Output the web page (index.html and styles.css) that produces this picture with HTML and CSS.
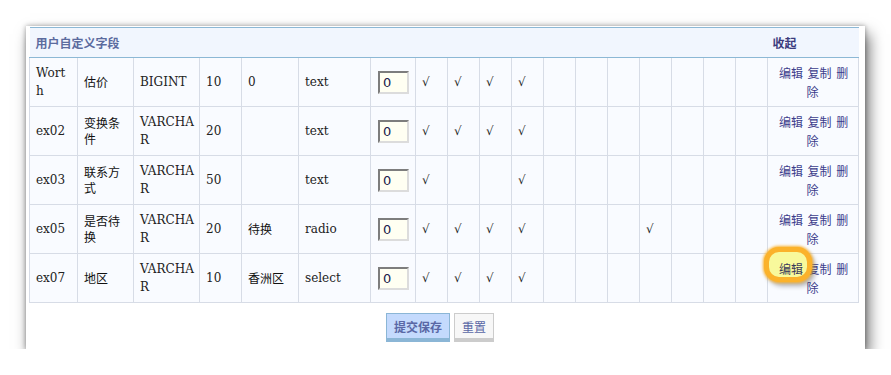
FILE: index.html
```html
<!DOCTYPE html>
<html lang="zh-CN">
<head>
    <meta charset="UTF-8">
    <title>用户自定义字段</title>
    <link rel="stylesheet" href="styles.css">
</head>
<body>
    <div class="panel">
        <table class="fields">
            <colgroup>
                <col style="width:48px"><col style="width:56px"><col style="width:66px"><col style="width:42px">
                <col style="width:57px"><col style="width:72px"><col style="width:45px">
                <col class="chk"><col class="chk"><col class="chk"><col class="chk"><col class="chk"><col class="chk">
                <col class="chk"><col class="chk"><col class="chk"><col class="chk"><col class="chk">
                <col style="width:91px">
            </colgroup>
            <thead>
                <tr>
                    <th colspan="18" class="title">用户自定义字段</th>
                    <th class="toggle">收起</th>
                </tr>
            </thead>
            <tbody>
                <tr>
                    <td>Worth</td><td class="cn">估价</td><td>BIGINT</td><td>10</td><td>0</td><td>text</td>
                    <td><input type="text" value="0"></td>
                    <td>√</td><td>√</td><td>√</td><td>√</td><td></td><td></td><td></td><td></td><td></td><td></td><td></td>
                    <td class="ops"><a href="#">编辑</a> <a href="#">复制</a> <a href="#">删除</a></td>
                </tr>
                <tr>
                    <td>ex02</td><td class="cn">变换条件</td><td>VARCHAR</td><td>20</td><td></td><td>text</td>
                    <td><input type="text" value="0"></td>
                    <td>√</td><td>√</td><td>√</td><td>√</td><td></td><td></td><td></td><td></td><td></td><td></td><td></td>
                    <td class="ops"><a href="#">编辑</a> <a href="#">复制</a> <a href="#">删除</a></td>
                </tr>
                <tr>
                    <td>ex03</td><td class="cn">联系方式</td><td>VARCHAR</td><td>50</td><td></td><td>text</td>
                    <td><input type="text" value="0"></td>
                    <td>√</td><td></td><td></td><td>√</td><td></td><td></td><td></td><td></td><td></td><td></td><td></td>
                    <td class="ops"><a href="#">编辑</a> <a href="#">复制</a> <a href="#">删除</a></td>
                </tr>
                <tr>
                    <td>ex05</td><td class="cn">是否待换</td><td>VARCHAR</td><td>20</td><td class="cn">待换</td><td>radio</td>
                    <td><input type="text" value="0"></td>
                    <td>√</td><td>√</td><td>√</td><td>√</td><td></td><td></td><td></td><td>√</td><td></td><td></td><td></td>
                    <td class="ops"><a href="#">编辑</a> <a href="#">复制</a> <a href="#">删除</a></td>
                </tr>
                <tr>
                    <td>ex07</td><td class="cn">地区</td><td>VARCHAR</td><td>10</td><td class="cn">香洲区</td><td>select</td>
                    <td><input type="text" value="0"></td>
                    <td>√</td><td>√</td><td>√</td><td>√</td><td></td><td></td><td></td><td></td><td></td><td></td><td></td>
                    <td class="ops"><a href="#" class="marked">编辑</a> <a href="#">复制</a> <a href="#">删除</a></td>
                </tr>
            </tbody>
        </table>

        <div class="actions">
            <button type="submit" class="btn primary">提交保存</button>
            <button type="reset" class="btn">重置</button>
        </div>
    </div>
</body>
</html>
```

FILE: styles.css
```css
* {
    box-sizing: border-box;
}

body {
    margin: 0;
    padding: 26px 0 0 26px;
    background: #fff;
    font-family: "DejaVu Serif", "Noto Sans CJK SC", serif;
}

.panel {
    width: 839px;
    background: #fff;
    padding: 1px 7px 7px 3px;
    box-shadow: 0 0 5px rgba(0, 0, 0, 0.35), 4px 8px 14px rgba(0, 0, 0, 0.55);
}

.fields {
    width: 829px;
    table-layout: fixed;
    border-collapse: collapse;
}

.fields col.chk {
    width: 32px;
}

.fields th {
    height: 30px;
    padding: 0 6px;
    background: #f1f6fe;
    border-top: 1px solid #8cb8d5;
    border-bottom: 1px solid #8cb8d5;
    border-left: none;
    border-right: none;
    text-align: left;
    font: bold 12px/18px "Noto Sans CJK SC", sans-serif;
}

.fields th.title {
    color: #5b6b9e;
}

.fields th.toggle {
    padding-left: 5px;
    color: #3b3b7d;
}

.fields td {
    height: 49px;
    padding: 6px 6px;
    background: #f9fbff;
    border: 1px solid #d7dce6;
    color: #222;
    font-size: 12px;
    line-height: 18px;
    word-break: break-all;
    vertical-align: middle;
}

/* type column: room for "VARCHA" on the first line */
.fields td:nth-child(3) {
    padding-right: 2px;
}

.fields td.cn {
    font-family: "Noto Sans CJK SC", sans-serif;
    line-height: 16px;
    color: #111;
}

.fields td input {
    width: 31px;
    height: 23px;
    padding: 0 3px;
    margin: 0 0 0 1px;
    background: #fffff2;
    border: 2px solid;
    border-color: #7d7d7d #dcdcdc #dcdcdc #7d7d7d;
    font: 13px "DejaVu Sans", sans-serif;
    color: #1b1b4a;
}

.fields td.ops {
    padding: 5px 5px;
    text-align: center;
    font: 12px/19px "Noto Sans CJK SC", sans-serif;
}

.ops a {
    margin: 0 1px;
    color: #3d3d8c;
    text-decoration: none;
}

.ops a.marked {
    position: relative;
    z-index: 0;
    color: #3a3a5a;
}

.ops a.marked::before {
    content: "";
    position: absolute;
    top: -13px;
    bottom: -5px;
    left: -15px;
    right: -9px;
    z-index: -1;
    background: #f8f99c;
    border: 5px solid #fbb22b;
    border-radius: 15px;
    box-shadow: 0 0 3px 1px #fbb22b, 3px 4px 5px rgba(0, 0, 0, 0.3);
}

.actions {
    display: flex;
    justify-content: center;
    gap: 4px;
    margin-top: 10px;
    padding-right: 7px;
}

.btn {
    height: 29px;
    padding: 2px 7px 0;
    background: #f7f7f7;
    border: 1px solid #cccccc;
    border-bottom: 4px solid #cccccc;
    color: #5a68a6;
    font: 12px/18px "Noto Sans CJK SC", sans-serif;
    cursor: pointer;
}

.btn.primary {
    background: #c4dafd;
    border-color: #8bb6d6;
    font-weight: bold;
}
```
